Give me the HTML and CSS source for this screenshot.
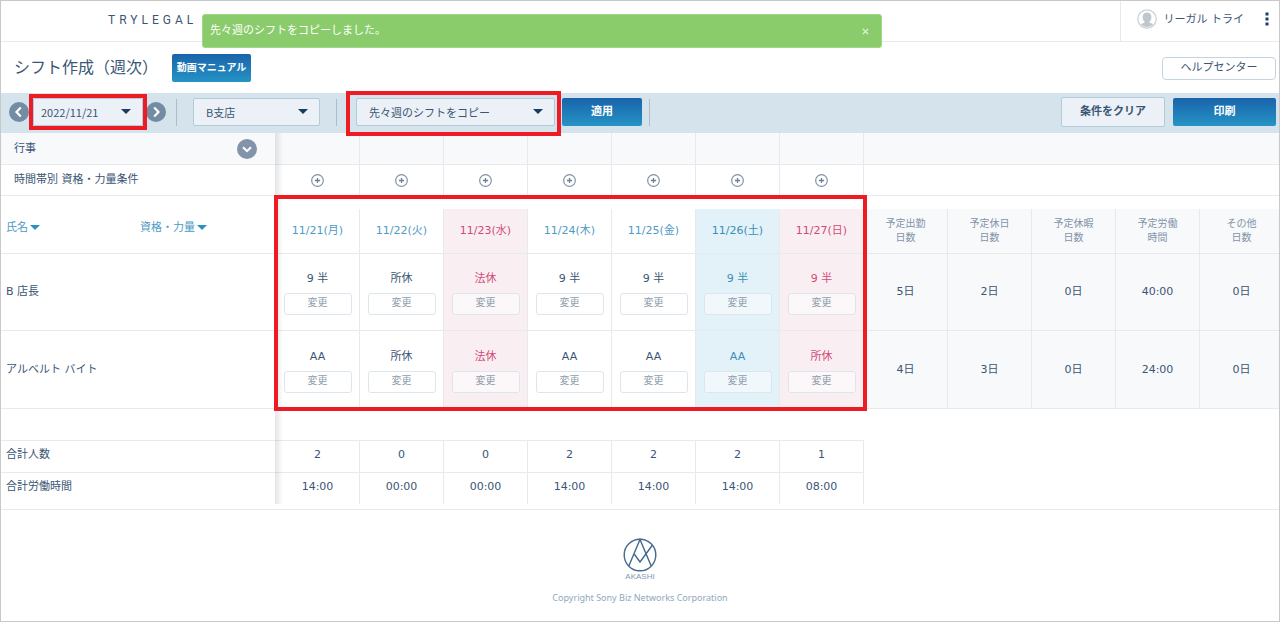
FILE: index.html
```html
<!DOCTYPE html>
<html lang="ja">
<head>
<meta charset="utf-8">
<meta name="viewport" content="width=device-width, initial-scale=1">
<title>シフト作成（週次）</title>
<link rel="stylesheet" href="styles.css">
</head>
<body>
<svg class="defs" aria-hidden="true">
  <symbol id="plus" viewBox="0 0 12 12"><circle cx="6" cy="6" r="5.4" fill="none" stroke="#8293a6" stroke-width="1.1"/><path d="M6 3.6v4.800M3.6 6h4.800" stroke="#6b8199" stroke-width="1.2"/></symbol>
</svg>
<div class="page">
  <header class="topbar">
    <span class="brand">TRYLEGAL</span>
    <div class="account">
      <svg class="avatar" viewBox="0 0 20 20" aria-hidden="true"><circle cx="10" cy="10" r="9.2" fill="#fff" stroke="#c9d1d6" stroke-width="1.2"/><path d="M10 3.4c-2.800 0-4.400 1.900-4.400 4.500 0 2 .7 3.500 1.900 4.500v1.200L3.800 15.200a8 8 0 0 0 12.400 0L12.500 13.600v-1.200c1.200-1 1.900-2.500 1.900-4.500 0-2.600-1.600-4.500-4.400-4.500z" fill="#bdc7cd"/></svg>
      <span>リーガル トライ</span>
      <button class="more" type="button" aria-label="メニュー"><svg viewBox="0 0 4 14" aria-hidden="true"><path d="M.5.5h3v3h-3zM.5 5.500h3v3h-3zM.5 10.500h3v3h-3z" fill="#1d3f66"/></svg></button>
    </div>
    <div class="toast" role="status"><span>先々週のシフトをコピーしました。</span><button type="button" aria-label="閉じる"><svg viewBox="0 0 8 8" aria-hidden="true"><path d="M1 1l6 6M7 1L1 7" stroke="#e6f5de" stroke-width="1.400"/></svg></button></div>
  </header>

  <div class="titlebar">
    <h1>シフト作成（週次）</h1>
    <button class="manual primary" type="button">動画マニュアル</button>
    <button class="help" type="button">ヘルプセンター</button>
  </div>

  <div class="toolbar">
    <button class="round" type="button" aria-label="前の週"><svg viewBox="0 0 20 20" aria-hidden="true"><path d="M11.800 5.500L7.500 10l4.300 4.500" fill="none" stroke="#fff" stroke-width="2.200"/></svg></button>
    <label class="picker date marked"><select aria-label="週"><option>2022/11/21</option></select></label>
    <button class="round" type="button" aria-label="次の週"><svg viewBox="0 0 20 20" aria-hidden="true"><path d="M8.200 5.500l4.300 4.500-4.300 4.500" fill="none" stroke="#fff" stroke-width="2.200"/></svg></button>
    <span class="divider"></span>
    <label class="picker branch"><select aria-label="支店"><option>B支店</option></select></label>
    <span class="divider"></span>
    <label class="picker copy marked wide"><select aria-label="操作"><option>先々週のシフトをコピー</option></select></label>
    <button class="apply primary" type="button">適用</button>
    <span class="divider last"></span>
    <button class="clear" type="button">条件をクリア</button>
    <button class="print primary" type="button">印刷</button>
  </div>

  <main class="sheet">
    <table>
      <colgroup><col class="name-col"><col span="12"></colgroup>
      <tbody class="conditions">
        <tr class="events"><th class="indent"><span class="split">行事<button class="round expand" type="button" aria-label="開く"><svg viewBox="0 0 20 20" aria-hidden="true"><path d="M6 8.200l4 3.800 4-3.800" fill="none" stroke="#fff" stroke-width="2"/></svg></button></span></th><td></td><td></td><td></td><td></td><td></td><td></td><td></td><td class="rest" colspan="5"></td></tr>
        <tr class="skills"><th class="indent">時間帯別 資格・力量条件</th>
          <td><button class="add" type="button" aria-label="追加"><svg><use href="#plus"/></svg></button></td>
          <td><button class="add" type="button" aria-label="追加"><svg><use href="#plus"/></svg></button></td>
          <td><button class="add" type="button" aria-label="追加"><svg><use href="#plus"/></svg></button></td>
          <td><button class="add" type="button" aria-label="追加"><svg><use href="#plus"/></svg></button></td>
          <td><button class="add" type="button" aria-label="追加"><svg><use href="#plus"/></svg></button></td>
          <td><button class="add" type="button" aria-label="追加"><svg><use href="#plus"/></svg></button></td>
          <td><button class="add" type="button" aria-label="追加"><svg><use href="#plus"/></svg></button></td>
          <td class="rest" colspan="5"></td></tr>
        <tr class="gap"><td class="rest" colspan="13"></td></tr>
      </tbody>
      <tbody class="shifts">
        <tr class="dates">
          <th class="sorts"><span class="sort-row"><button class="sort" type="button">氏名</button><button class="sort" type="button">資格・力量</button></span></th>
          <th class="day">11/21(月)</th><th class="day">11/22(火)</th><th class="day hol">11/23(水)</th><th class="day">11/24(木)</th><th class="day">11/25(金)</th><th class="day sat">11/26(土)</th><th class="day hol">11/27(日)</th>
          <th class="sum">予定出勤<br>日数</th><th class="sum">予定休日<br>日数</th><th class="sum">予定休暇<br>日数</th><th class="sum">予定労働<br>時間</th><th class="sum">その他<br>日数</th>
        </tr>
        <tr class="staff manager">
          <th>B 店長</th>
          <td><span class="shift">9 半</span><button class="edit" type="button">変更</button></td>
          <td><span class="shift">所休</span><button class="edit" type="button">変更</button></td>
          <td class="hol"><span class="shift">法休</span><button class="edit" type="button">変更</button></td>
          <td><span class="shift">9 半</span><button class="edit" type="button">変更</button></td>
          <td><span class="shift">9 半</span><button class="edit" type="button">変更</button></td>
          <td class="sat"><span class="shift">9 半</span><button class="edit" type="button">変更</button></td>
          <td class="hol"><span class="shift">9 半</span><button class="edit" type="button">変更</button></td>
          <td class="sum">5日</td><td class="sum">2日</td><td class="sum">0日</td><td class="sum">40:00</td><td class="sum">0日</td>
        </tr>
        <tr class="staff">
          <th>アルベルト バイト</th>
          <td><span class="shift">AA</span><button class="edit" type="button">変更</button></td>
          <td><span class="shift">所休</span><button class="edit" type="button">変更</button></td>
          <td class="hol"><span class="shift">法休</span><button class="edit" type="button">変更</button></td>
          <td><span class="shift">AA</span><button class="edit" type="button">変更</button></td>
          <td><span class="shift">AA</span><button class="edit" type="button">変更</button></td>
          <td class="sat"><span class="shift">AA</span><button class="edit" type="button">変更</button></td>
          <td class="hol"><span class="shift">所休</span><button class="edit" type="button">変更</button></td>
          <td class="sum">4日</td><td class="sum">3日</td><td class="sum">0日</td><td class="sum">24:00</td><td class="sum">0日</td>
        </tr>
      </tbody>
      <tbody class="totals">
        <tr class="lead"><td class="rule" colspan="8"></td><td class="blank" colspan="5"></td></tr>
        <tr class="count"><th>合計人数</th><td>2</td><td>0</td><td>0</td><td>2</td><td>2</td><td>2</td><td>1</td><td class="blank" colspan="5"></td></tr>
        <tr class="hours"><th>合計労働時間</th><td>14:00</td><td>00:00</td><td>00:00</td><td>14:00</td><td>14:00</td><td>14:00</td><td>08:00</td><td class="blank" colspan="5"></td></tr>
      </tbody>
    </table>
    <div class="highlight"></div>
  </main>

  <footer class="footer">
    <svg class="logo" viewBox="0 0 34 34" aria-hidden="true"><g fill="none" stroke="#44698f" stroke-width="1.400"><circle cx="17" cy="17" r="15.800"/><path d="M5.800 28L17 1.500 28.200 28"/><path d="M11.200 16L17 24 29.500 7"/></g></svg>
    <span class="logo-name">AKASHI</span>
    <small>Copyright Sony Biz Networks Corporation</small>
  </footer>
</div>
</body>
</html>
```

FILE: styles.css
```css
:root {
  --ink: #3a5675;
  --line: #e6eaed;
  --field: #b3cad9;
  --red: #ed1c24;
}

* { box-sizing: border-box; }

body {
  margin: 0;
  color: var(--ink);
  background: #fff;
  font: 11px/16px "DejaVu Sans", "Noto Sans CJK JP", sans-serif;
}

button, select { margin: 0; font: inherit; color: inherit; }
button { display: flex; align-items: center; justify-content: center; padding: 0; border: 0; background: none; cursor: pointer; }
svg { display: block; }
.defs { position: absolute; width: 0; height: 0; }

.page {
  display: flex;
  flex-direction: column;
  min-height: 100vh;
  border: 1px solid #c8c8c8;
  overflow: hidden;
}

.topbar {
  position: relative;
  display: flex;
  align-items: stretch;
  justify-content: space-between;
  height: 41px;
  border-bottom: 1px solid var(--line);
}
.brand { padding: 11px 0 0 107px; font: 12px/16px Roboto, sans-serif; letter-spacing: 4px; }
.account {
  display: flex;
  align-items: center;
  padding: 0 10px 4px 16px;
  gap: 7px;
  border-left: 1px solid var(--line);
}
.account span { padding-top: 2px; }
.avatar { width: 20px; height: 20px; }
.more { margin-left: 14px; }
.more svg { width: 4px; height: 14px; }

.toast {
  position: absolute;
  top: 13px;
  left: 201px;
  right: 397px;
  z-index: 2;
  display: flex;
  align-items: center;
  justify-content: space-between;
  height: 34px;
  padding: 0 12px 0 7px;
  border: 1px solid #9fd886;
  border-radius: 3px;
  background: #8acc6b;
  color: #fff;
}
.toast svg { width: 7px; height: 7px; }

.titlebar { display: flex; align-items: center; height: 51px; padding: 0 3px 0 13px; }
h1 { width: 158px; margin: 0; padding-bottom: 4px; font: 16px/24px "Noto Sans CJK JP", sans-serif; white-space: nowrap; }

.primary {
  height: 28px;
  padding-bottom: 2px;
  border-radius: 2px;
  background: linear-gradient(#1864aa, #2693c5);
  color: #fff;
  font-weight: bold;
}
.manual { width: 79px; padding-bottom: 0; font-size: 10px; }
.help {
  width: 114px;
  height: 23px;
  margin-left: auto;
  margin-top: 2px;
  padding-bottom: 2px;
  border: 1px solid #c2d4df;
  border-radius: 4px;
}

.toolbar { display: flex; align-items: center; height: 40px; padding: 0 3px 2px 8px; background: #d5e3ec; }
.round { flex: none; width: 20px; height: 20px; border-radius: 50%; background: #748ba4; }
.round svg { width: 20px; height: 20px; }
.expand { background: #8294a9; }
.picker { position: relative; flex: none; }
.picker select {
  appearance: none;
  width: 100%;
  height: 28px;
  padding: 0 24px 0 12px;
  border: 1px solid var(--field);
  border-radius: 2px;
  background: #ebf1f6;
  font-family: "Noto Sans CJK JP", sans-serif;
}
.picker::before {
  content: "";
  position: absolute;
  top: 11px;
  right: 12px;
  border: 5px solid transparent;
  border-top-color: #183d63;
  border-bottom: 0;
  pointer-events: none;
}
.marked::after {
  content: "";
  position: absolute;
  inset: -4px;
  border: 4px solid var(--red);
  pointer-events: none;
}
.date { width: 110px; margin: 0 3px 0 4px; }
.date select { padding-left: 7px; }
.branch { width: 127px; }
.copy { width: 199px; margin: 0 7px 0 3px; }
.wide::after { inset: -7px -6px -10px -10px; z-index: 1; }
.divider { flex: none; width: 1px; height: 27px; margin: 0 16px 0 10px; background: #a9bfce; }
.branch + .divider { margin-left: 16px; }
.divider.last { margin: 0 0 0 7px; }
.apply { width: 80px; }
.clear {
  width: 104px;
  height: 30px;
  margin: 0 8px 0 auto;
  padding-bottom: 1px;
  border: 1px solid var(--field);
  border-radius: 2px;
  background: #ebf1f6;
  font-weight: bold;
}
.apply, .print { padding-bottom: 0; }
.print { width: 103px; }

.sheet { position: relative; margin-bottom: 5px; overflow-x: clip; }
.sheet::before {
  content: "";
  position: absolute;
  inset: 0 auto 0 274px;
  width: 8px;
  background: linear-gradient(90deg, rgba(60, 70, 80, .14), rgba(60, 70, 80, 0));
  pointer-events: none;
}
table { width: 100%; min-width: 1283px; table-layout: fixed; border-spacing: 0; }
.name-col { width: 275px; }
th, td {
  padding: 0;
  border: solid var(--line);
  border-width: 0 1px 1px 0;
  font-weight: normal;
  text-align: center;
}
tr > th:first-child { padding-left: 5px; border-right: 0; text-align: left; }
tr > th.indent { padding-left: 13px; }
.rest, .blank, .rule { border-right: 0; }
.blank, .gap td { border: 0; }

.events { height: 32px; background: #f8f9fb; }
.split { display: flex; align-items: center; justify-content: space-between; padding-right: 19px; }
.skills { height: 31px; }
.gap { height: 13px; }
.add { width: 13px; height: 13px; margin: 0 auto; }
.add svg { width: 13px; height: 13px; }

.dates { height: 45px; color: #4e9bc6; }
.sort-row { display: grid; grid-template-columns: 134px auto; justify-content: start; padding-bottom: 6px; }
.sort { justify-content: flex-start; gap: 2px; }
.sort::after { content: ""; margin-bottom: 2px; border: 5px solid transparent; border-top-color: #2b91c3; border-bottom: 0; }
.staff { height: 78px; }
.staff.manager { height: 77px; }
.shift { display: block; margin-bottom: 4px; line-height: 20px; }
.edit {
  width: 68px;
  height: 22px;
  margin: 0 auto;
  padding-bottom: 2px;
  border: 1px solid #dce6ec;
  border-radius: 3px;
  background: rgba(255, 255, 255, .5);
  color: #8f9fae;
  font-size: 10px;
}
.hol { background: #f9eff3; color: #d14a77; }
.sat { background: #e3f1f8; color: #3b8fb6; }
.sum { background: #f8f9fb; }
th.sum { color: #8194a8; font-size: 10px; line-height: 14px; }

.lead, .count { height: 32px; }
.hours { height: 31px; }
.hours th, .hours td { border-bottom: 0; }
.totals th, .totals td { padding-bottom: 3px; }

.highlight {
  position: absolute;
  top: 62px;
  left: 273px;
  width: 593px;
  height: 216px;
  border: 4px solid var(--red);
  pointer-events: none;
}

.footer {
  flex: 1;
  display: flex;
  flex-direction: column;
  align-items: center;
  padding-top: 28px;
  border-top: 1px solid var(--line);
}
.logo { width: 34px; height: 34px; }
.logo-name { color: #7f9bb2; font: 8px/10px "Liberation Sans", sans-serif; }
.footer small { margin-top: 10px; color: #8fa8ba; font: 9px/12px "Noto Sans", sans-serif; }
```
